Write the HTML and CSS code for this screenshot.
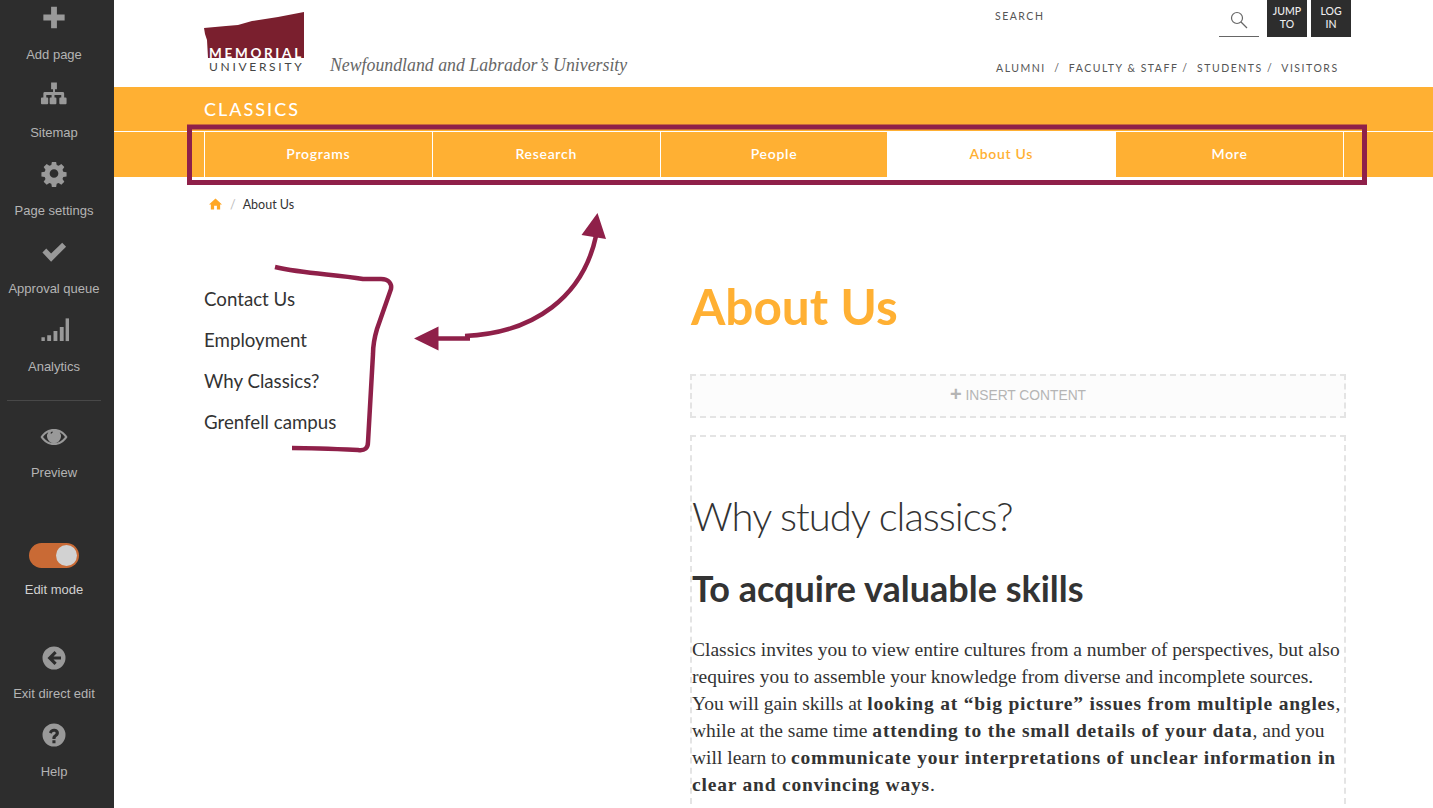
FILE: index.html
```html
<!DOCTYPE html>
<html lang="en">
<head>
    <meta charset="UTF-8">
    <title>About Us - Classics</title>
    <link rel="stylesheet" href="styles.css">
</head>
<body>
    <aside class="sidebar">
        <a class="tool">
            <svg class="tool-icon" viewBox="0 0 30 30"><path d="M12 4h6v8h8v6h-8v8h-6v-8H4v-6h8z"/></svg>
            <span>Add page</span>
        </a>
        <a class="tool">
            <svg class="tool-icon" viewBox="0 0 30 30"><path d="M12 1.500h6v7h-2v3h8a1.500 1.500 0 0 1 1.500 1.500v4h1.500a1 1 0 0 1 1 1v5a1 1 0 0 1-1 1h-5.500a1 1 0 0 1-1-1v-5a1 1 0 0 1 1-1h1v-2.500h-7v2.500h1a1 1 0 0 1 1 1v5a1 1 0 0 1-1 1h-5a1 1 0 0 1-1-1v-5a1 1 0 0 1 1-1h1v-2.500H7v2.500h1a1 1 0 0 1 1 1v5a1 1 0 0 1-1 1H2.500a1 1 0 0 1-1-1v-5a1 1 0 0 1 1-1H4v-4a1.500 1.500 0 0 1 1.500-1.500H14v-3h-2z"/></svg>
            <span>Sitemap</span>
        </a>
        <a class="tool">
            <svg class="tool-icon" viewBox="0 0 30 30"><path fill-rule="evenodd" d="M12.800 3h4.400l.6 3.300 2 .8 2.800-1.900 3.100 3.100-1.900 2.800.8 2 3.400.6v4.400l-3.400.6-.8 2 1.900 2.800-3.100 3.100-2.800-1.900-2 .8-.6 3.400h-4.400l-.6-3.400-2-.8-2.800 1.900-3.100-3.100 1.900-2.800-.8-2-3.400-.6v-4.400l3.400-.6.800-2-1.900-2.800 3.100-3.100 2.800 1.900 2-.8zM15 10.500a4.500 4.500 0 1 0 0 9 4.500 4.500 0 0 0 0-9z"/></svg>
            <span>Page settings</span>
        </a>
        <a class="tool">
            <svg class="tool-icon" viewBox="0 0 30 30"><path d="M3 16l4-4 5 5L23.500 6l4 4L12 25.500z"/></svg>
            <span>Approval queue</span>
        </a>
        <a class="tool">
            <svg class="tool-icon" viewBox="0 0 30 30"><path d="M2 23h3.500v4H2zM8 21h4v6H8zM14.500 16.500h4V27h-4zM21 12.500h4V27h-4z"/><path d="M24.500 3.500h4V27h-4z" transform="translate(2 0)" opacity="0"/><path d="M23 3.500h4V27h-4z" transform="translate(4 0)"/></svg>
            <span>Analytics</span>
        </a>
        <div class="tool-divider"></div>
        <a class="tool tool-preview">
            <svg class="tool-icon" viewBox="0 0 30 30"><path fill-rule="evenodd" d="M1.500 15C5 9.500 9.500 7 15 7s10 2.500 13.500 8C25 20.500 20.500 23 15 23S5 20.500 1.500 15zm2.500 0c2.800 3.800 6.500 6.200 11 6.200s8.200-2.400 11-6.200c-1.500-2-3.200-3.700-5.300-4.800a7 7 0 1 1-11.400 0C7.200 11.300 5.500 13 4 15zm9.500-5.500a2 2 0 0 0-2 2h1.400a1 1 0 0 1 1-1z"/></svg>
            <span>Preview</span>
        </a>
        <div class="tool tool-edit">
            <div class="toggle"><div class="toggle-knob"></div></div>
            <span>Edit mode</span>
        </div>
        <a class="tool tool-exit">
            <svg class="tool-icon" viewBox="0 0 30 30"><path fill-rule="evenodd" d="M15 3.500a11.500 11.500 0 1 1 0 23 11.500 11.500 0 0 1 0-23zM15.500 8l-7 7 7 7 2.200-2.200-3.200-3.200H22v-3.200h-7.500l3.200-3.200z"/></svg>
            <span>Exit direct edit</span>
        </a>
        <a class="tool tool-help">
            <svg class="tool-icon" viewBox="0 0 30 30"><path fill-rule="evenodd" d="M15 3.500a11.500 11.500 0 1 1 0 23 11.500 11.500 0 0 1 0-23zM10 12.500l2.600 1.200c.4-1.300 1.200-2 2.300-2 1 0 1.800.5 1.800 1.400 0 1.700-3.300 2-3.300 5v.9h3.100v-.6c0-1.800 3.400-2.200 3.400-5.500 0-2.600-2.400-4.100-5-4.100-2.300 0-4 1.100-4.900 3.700zM13.400 20.200v3h3.100v-3z"/></svg>
            <span>Help</span>
        </a>
    </aside>

    <div class="page">
        <header class="masthead">
            <div class="brand">
                <svg class="logo" viewBox="0 0 100 62" width="100" height="62">
                    <path class="logo-shape" d="M0 16l22-2 12-1 14-4 26-4 26-5v46H4l-1-18-2-6z"/>
                    <text class="logo-top" x="5" y="46">MEMORIAL</text>
                    <text class="logo-bottom" x="5" y="59">UNIVERSITY</text>
                </svg>
                <span class="tagline">Newfoundland and Labrador’s University</span>
            </div>
            <div class="utility">
                <div class="utility-top">
                    <span class="search-label">SEARCH</span>
                    <div class="search-box">
                        <svg viewBox="0 0 18 18" width="18" height="18"><circle cx="7" cy="7" r="5.500"/><path d="M11 11l6 6"/></svg>
                    </div>
                    <a class="square-btn">JUMP<br>TO</a>
                    <a class="square-btn">LOG<br>IN</a>
                </div>
                <div class="audience">ALUMNI &nbsp;/&nbsp; FACULTY &amp; STAFF / &nbsp;STUDENTS / &nbsp;VISITORS</div>
            </div>
        </header>

        <div class="band">
            <div class="band-title">CLASSICS</div>
            <nav class="mainnav">
                <a>Programs</a>
                <a>Research</a>
                <a>People</a>
                <a class="active">About Us</a>
                <a>More</a>
            </nav>
        </div>

        <div class="crumbs">
            <svg viewBox="0 0 14 12" width="13" height="12"><path d="M7 0l7 6.500h-2V12H8.500V8h-3v4H2V6.500H0z"/></svg>
            <span class="crumb-sep">/</span>
            <span>About Us</span>
        </div>

        <div class="columns">
            <ul class="sidenav">
                <li>Contact Us</li>
                <li>Employment</li>
                <li>Why Classics?</li>
                <li>Grenfell campus</li>
            </ul>
            <main class="content">
                <h1>About Us</h1>
                <div class="insert"><b>+</b> INSERT CONTENT</div>
                <section class="block">
                    <h2>Why study classics?</h2>
                    <h3>To acquire valuable skills</h3>
                    <p>Classics invites you to view entire cultures from a number of perspectives, but also requires you to assemble your knowledge from diverse and incomplete sources. You will gain skills at <b>looking at “big picture” issues from multiple angles</b>, while at the same time <b>attending to the small details of your data</b>, and you will learn to <b>communicate your interpretations of unclear information in clear and convincing ways</b>.</p>
                </section>
            </main>
        </div>
    </div>

    <!-- hand drawn annotations on top of the page -->
    <svg class="marks" viewBox="0 0 1433 808">
        <rect x="189.500" y="127" width="1175" height="55.500"/>
        <path d="M275 267c30 7 60 7 88 12h18c8 0 11 5 10 10l-14 40c-3 10-4 18-4 25l-5 88c0 6-3 9-10 8-22-1-44-2-66-2"/>
        <path d="M470 338.500h-32M465 336c70-3 118-40 131-100"/>
        <path class="head" d="M414 338.500l24.500-12v24zM597.500 213l-16 22 24.500 4z"/>
    </svg>
</body>
</html>
```

FILE: styles.css
```css
* {
    box-sizing: border-box;
}
html, body {
    margin: 0;
    height: 808px;
    overflow: hidden;
}
body {
    display: flex;
    font-family: "Lato", sans-serif;
    color: #333;
    background-color: #fff;
}

/* left toolbar */
.sidebar {
    width: 114px;
    flex-shrink: 0;
    height: 808px;
    padding: 3px 6px 0 0;
    background-color: #2d2d2d;
    display: flex;
    flex-direction: column;
    font-family: "Liberation Sans", Arial, sans-serif;
}
.tool {
    display: flex;
    flex-direction: column;
    align-items: center;
    height: 61px;
    margin-bottom: 17px;
    font-size: 13px;
    line-height: 18px;
    color: #b4b4b4;
    white-space: nowrap;
}
.tool-icon {
    width: 30px;
    height: 30px;
    margin-bottom: 14px;
    fill: #999;
}
.tool-divider {
    height: 1px;
    margin: 7px 7px 21px 7px;
    background-color: #484848;
}
.tool-preview {
    margin-bottom: 0;
}
.tool-preview .tool-icon {
    margin-bottom: 12px;
}
.toggle {
    width: 50px;
    height: 25px;
    margin-top: 60px;
    margin-bottom: 13px;
    padding: 2px;
    border-radius: 13px;
    background-color: #c96a35;
    display: flex;
    justify-content: flex-end;
}
.toggle-knob {
    width: 21px;
    height: 21px;
    border-radius: 50%;
    background-color: #d2d2d2;
}
.tool-edit {
    height: 117px;
    margin-bottom: 0;
    color: #d0d0d0;
}
.tool-exit {
    margin-top: 43px;
    margin-bottom: 16px;
}
.tool-exit .tool-icon {
    margin-bottom: 12px;
}
.tool-help .tool-icon {
    margin-bottom: 13px;
}

/* page */
.page {
    flex: 1;
    min-width: 0;
}
.masthead {
    height: 87px;
    display: flex;
    justify-content: space-between;
    padding: 0 82px 0 90px;
}
.brand {
    display: flex;
    align-items: flex-start;
    padding-top: 12px;
}
.logo-shape {
    fill: #7a1f2e;
}
.logo-top {
    font-size: 13.500px;
    font-weight: 700;
    letter-spacing: 2.700px;
    fill: #fff;
}
.logo-bottom {
    font-size: 12px;
    letter-spacing: 2.700px;
    fill: #444;
}
.tagline {
    margin: 42px 0 0 26px;
    font-family: "Liberation Serif", serif;
    font-style: italic;
    font-size: 17.800px;
    line-height: 22px;
    color: #666;
    white-space: nowrap;
}
.utility {
    width: 356px;
}
.utility-top {
    display: flex;
    align-items: flex-start;
    height: 37px;
}
.search-label {
    width: 224px;
    padding-top: 10px;
    font-size: 10.500px;
    line-height: 13px;
    letter-spacing: 1.500px;
    color: #555;
}
.search-box {
    width: 40px;
    height: 37px;
    margin-right: 8px;
    padding-top: 11px;
    border-bottom: 1px solid #666;
    text-align: center;
}
.search-box svg {
    fill: none;
    stroke: #666;
    stroke-width: 1.200;
}
.square-btn {
    width: 40px;
    height: 37px;
    margin-left: 4px;
    padding-top: 5px;
    background-color: #2d2d2d;
    color: #eee;
    font-size: 10.500px;
    font-weight: 500;
    line-height: 13px;
    text-align: center;
}
.search-box + .square-btn {
    margin-left: 0;
}
.audience {
    margin-top: 24px;
    padding-left: 1px;
    font-size: 10.500px;
    line-height: 14px;
    letter-spacing: 1.520px;
    color: #555;
    white-space: nowrap;
}

/* orange band */
.band {
    height: 90px;
    background-color: #ffb033;
    color: #fff;
}
.band-title {
    height: 45px;
    padding: 11px 0 0 90px;
    border-bottom: 1px solid #fff;
    font-size: 18px;
    font-weight: 500;
    line-height: 22px;
    letter-spacing: 2px;
}
.mainnav {
    display: flex;
    height: 45px;
    margin-left: 90px;
    width: 1140px;
    border-right: 1px solid #fff;
}
.mainnav a {
    width: 227.800px;
    border-left: 1px solid #fff;
    font-size: 14px;
    font-weight: 600;
    letter-spacing: .7px;
    line-height: 44px;
    text-align: center;
}
.mainnav a.active {
    background-color: #fff;
    color: #ffb033;
    border-left: 0;
}

.crumbs {
    display: flex;
    align-items: center;
    height: 18px;
    margin: 18px 0 0 95px;
    font-size: 12.500px;
}
.crumbs svg {
    fill: #ffa726;
}
.crumb-sep {
    margin: 0 7px 0 8px;
    color: #bbb;
}

.columns {
    display: flex;
    padding-left: 90px;
}
.sidenav {
    width: 486px;
    flex-shrink: 0;
    margin: 0;
    padding: 66px 0 0;
    list-style: none;
    font-size: 18.700px;
    line-height: 41px;
}
.content {
    width: 656px;
}
h1 {
    margin: 0;
    padding: 65px 0 0 1px;
    font-size: 49.500px;
    font-weight: 700;
    line-height: 56px;
    color: #ffb033;
}
.insert {
    height: 44px;
    margin-top: 40px;
    border: 2px dashed #e4e4e4;
    background-color: #fcfcfc;
    font-family: "Liberation Sans", Arial, sans-serif;
    font-size: 13.800px;
    line-height: 40px;
    text-align: center;
    color: #b5b5b5;
}
.insert b {
    font-size: 20px;
    line-height: 20px;
    vertical-align: -1px;
}
.block {
    margin-top: 17px;
    height: 500px;
    border: 2px dashed #e4e4e4;
}
h2 {
    margin: 51px 0 0;
    font-size: 40px;
    font-weight: 300;
    letter-spacing: -1px;
    line-height: 56px;
}
h3 {
    margin: 22px 0 0;
    font-size: 36px;
    font-weight: 700;
    line-height: 44px;
}
.block p {
    margin: 26px 0 0;
    font-family: "Liberation Serif", serif;
    font-size: 19.500px;
    line-height: 27px;
    color: #333;
}
.block p b {
    letter-spacing: .8px;
}

/* annotation overlay */
.marks {
    position: absolute;
    left: 0;
    top: 0;
    width: 1433px;
    height: 808px;
    pointer-events: none;
    fill: none;
    stroke: #8f2049;
    stroke-width: 4.500;
}
.marks rect {
    stroke-width: 5;
}
.marks .head {
    fill: #8f2049;
    stroke: none;
}
```
